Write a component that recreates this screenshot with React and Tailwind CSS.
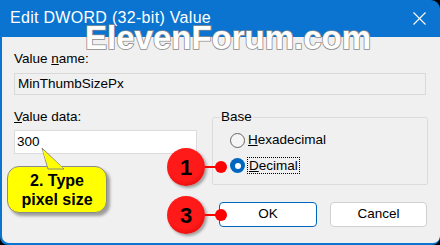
import React from "react";

const Marker = ({ n, top }) => (
  <div className="absolute left-[167px] flex items-center" style={{ top }}>
    <div className="w-[38px] h-[38px] rounded-full bg-[radial-gradient(circle_at_45%_40%,#ff1a1a_55%,#d00000_100%)] shadow-[2px_2px_3px_rgba(0,0,0,0.35)] flex items-center justify-center text-[22px] font-bold text-black font-['Liberation_Sans',sans-serif]">
      {n}
    </div>
    <div className="w-[12px] h-[2px] bg-[#ff0000]" />
    <div className="w-[12px] h-[12px] rounded-full bg-[#ff0000] -ml-[2px]" />
  </div>
);

const App = () => {
  return (
    <div className="relative w-[440px] h-[245px] bg-black overflow-hidden font-['Liberation_Sans',Arial,sans-serif] text-black">
      <div className="w-full h-full flex flex-col bg-[#0a74d0] rounded-tr-[9px] rounded-b-[8px] overflow-hidden">
        <div className="h-[37px] shrink-0 flex items-center justify-between pl-[10px] pr-[14px] text-white">
          <span className="text-[16px] tracking-[0.3px] pb-[2px]">Edit DWORD (32-bit) Value</span>
          <svg width="13" height="13" viewBox="0 0 13 13">
            <path d="M0.5 0.5 L12.5 12.5 M12.5 0.5 L0.5 12.5" stroke="white" strokeWidth="1.1" />
          </svg>
        </div>
        <div className="flex-1 bg-[#f0f0f0] ml-[2px] mb-[2px] rounded-bl-[7px] rounded-br-[7px] px-[12px] pt-[14px] text-[13.5px]">
          <div className="leading-[16px]">
            Value <span className="underline">n</span>ame:
          </div>
          <div className="mt-[6px] h-[22px] w-[412px] border border-[#d9d9d9] bg-[#f0f0f0] flex items-center px-[3px] leading-none">
            MinThumbSizePx
          </div>
          <div className="flex items-start mt-[14px]">
            <div className="w-[198px] shrink-0">
              <div className="leading-[16px]">
                <span className="underline">V</span>alue data:
              </div>
              <div className="mt-[5px] h-[24px] w-[183px] border border-[#dcdcdc] bg-white flex items-center px-[2px] leading-none">
                300
              </div>
            </div>
            <fieldset className="mt-[0px] w-[216px] h-[76px] border border-[#dcdcdc] rounded-[2px] pl-[17px]">
              <legend className="px-[1px] ml-[-10px] leading-[16px]">Base</legend>
              <div className="flex items-center gap-[3px] mt-[7px] h-[16px]">
                <div className="w-[15px] h-[15px] rounded-full border border-[#666] bg-[#f5f5f5]" />
                <span>
                  <span className="underline">H</span>exadecimal
                </span>
              </div>
              <div className="flex items-center gap-[2px] mt-[9px] h-[17px]">
                <div className="w-[15px] h-[15px] rounded-full bg-[#0067c0] flex items-center justify-center">
                  <div className="w-[6px] h-[6px] rounded-full bg-white" />
                </div>
                <span className="border border-dotted border-black px-[1px] leading-[15px]">
                  <span className="underline">D</span>ecimal
                </span>
              </div>
            </fieldset>
          </div>
          <div className="flex justify-end gap-[13px] mt-[17px] pr-[1px]">
            <button className="w-[98px] h-[25px] rounded-[4px] border border-[#0067c0] bg-white text-[13.5px]">OK</button>
            <button className="w-[97px] h-[25px] rounded-[4px] border border-[#d0d0d0] bg-white text-[13.5px]">Cancel</button>
          </div>
        </div>
      </div>

      <div className="absolute left-[85px] top-[21px] text-[33px] font-bold text-white [-webkit-text-stroke:1.6px_#8c8c8c] [paint-order:stroke_fill] leading-none">
        ElevenForum.com
      </div>

      <Marker n="1" top="148px" />
      <Marker n="3" top="196px" />

      <div className="absolute left-[7px] top-[147px]">
        <svg className="absolute left-0 top-0" width="70" height="24" viewBox="0 0 70 24">
          <path d="M35 1 L41 22 L57 22 Z" fill="#ffff00" stroke="#8a8a8a" strokeWidth="1" />
        </svg>
        <div className="mt-[19px] w-[100px] h-[47px] rounded-[12px] bg-[#ffff00] border border-[#8a8a8a] shadow-[3px_3px_3px_rgba(0,0,0,0.35)] flex flex-col items-center justify-center text-[16px] font-bold leading-[19px]">
          <span>2. Type</span>
          <span>pixel size</span>
        </div>
        <svg className="absolute left-0 top-0" width="70" height="24" viewBox="0 0 70 24">
          <path d="M35.5 3 L41.5 21 L56 21 Z" fill="#ffff00" />
        </svg>
      </div>
    </div>
  );
};

export default App;
